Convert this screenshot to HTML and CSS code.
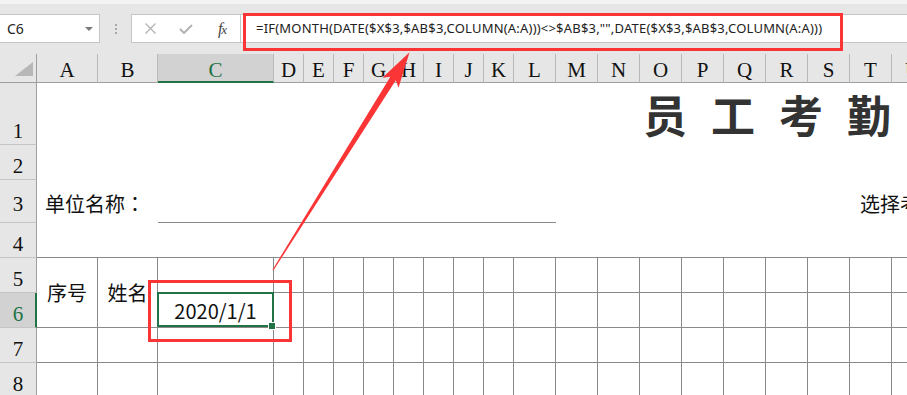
FILE: index.html
```html
<!DOCTYPE html>
<html lang="zh-CN">
<head>
	<meta charset="UTF-8">
	<title>员工考勤表</title>
	<link rel="stylesheet" href="styles.css">
</head>
<body>
	<!-- 编辑栏 -->
	<div class="toolbar">
		<div class="formula-row">
			<div class="name-box">
				<span>C6</span>
				<i class="drop"></i>
			</div>
			<div class="grip"><i></i><i></i><i></i></div>
			<div class="fx-box">
				<svg width="11" height="11" viewBox="0 0 11 11"><path d="M0.5 0.5 L10.5 10.5 M10.5 0.5 L0.5 10.5" stroke="#b3b3b3" stroke-width="1.3" fill="none"/></svg>
				<svg width="14" height="10" viewBox="0 0 14 10"><path d="M1 5 L5 9 L13 1" stroke="#b3b3b3" stroke-width="2" fill="none"/></svg>
				<span class="fx">f<span>x</span></span>
			</div>
			<div class="formula">=IF(MONTH(DATE($X$3,$AB$3,COLUMN(A:A)))&lt;&gt;$AB$3,"",DATE($X$3,$AB$3,COLUMN(A:A)))</div>
		</div>
	</div>

	<!-- 表格 -->
	<div class="sheet">
		<div class="corner">
			<svg width="37" height="28" viewBox="0 0 37 28"><polygon points="33,8 33,22 15,22" fill="#b7b7b7"/></svg>
		</div>
		<div class="ch">A</div>
		<div class="ch">B</div>
		<div class="ch sel">C</div>
		<div class="ch">D</div>
		<div class="ch">E</div>
		<div class="ch">F</div>
		<div class="ch">G</div>
		<div class="ch">H</div>
		<div class="ch">I</div>
		<div class="ch">J</div>
		<div class="ch">K</div>
		<div class="ch">L</div>
		<div class="ch">M</div>
		<div class="ch">N</div>
		<div class="ch">O</div>
		<div class="ch">P</div>
		<div class="ch">Q</div>
		<div class="ch">R</div>
		<div class="ch">S</div>
		<div class="ch">T</div>
		<div class="ch">U</div>

		<!-- 1 -->
		<div class="rh">1</div>
		<div class="span-3"></div>
		<div class="title">员工考勤表</div>

		<!-- 2 -->
		<div class="rh">2</div>
		<div class="span-all"></div>

		<!-- 3 -->
		<div class="rh rh-3">3</div>
		<div class="label span-2">单位名称<span class="colon">：</span></div>
		<div class="underline span-10"></div>
		<div class="span-7"></div>
		<div class="label label-right span-2">选择考勤月份<span class="colon">：</span></div>

		<!-- 4 -->
		<div class="rh">4</div>
		<div class="span-all line-bottom"></div>

		<!-- 5 -->
		<div class="rh">5</div>
		<div class="c head merged">序号</div>
		<div class="c head merged">姓名</div>
		<div class="c"></div>
		<div class="c"></div><div class="c"></div><div class="c"></div><div class="c"></div>
		<div class="c"></div><div class="c"></div><div class="c"></div><div class="c"></div>
		<div class="c"></div><div class="c"></div><div class="c"></div><div class="c"></div><div class="c"></div>
		<div class="c"></div><div class="c"></div><div class="c"></div><div class="c"></div><div class="c"></div>

		<!-- 6 -->
		<div class="rh sel">6</div>
		<div class="c active">2020/1/1</div>
		<div class="c"></div><div class="c"></div><div class="c"></div><div class="c"></div>
		<div class="c"></div><div class="c"></div><div class="c"></div><div class="c"></div>
		<div class="c"></div><div class="c"></div><div class="c"></div><div class="c"></div><div class="c"></div>
		<div class="c"></div><div class="c"></div><div class="c"></div><div class="c"></div><div class="c"></div>

		<!-- 7 -->
		<div class="rh">7</div>
		<div class="c"></div><div class="c"></div><div class="c"></div>
		<div class="c"></div><div class="c"></div><div class="c"></div><div class="c"></div>
		<div class="c"></div><div class="c"></div><div class="c"></div><div class="c"></div>
		<div class="c"></div><div class="c"></div><div class="c"></div><div class="c"></div><div class="c"></div>
		<div class="c"></div><div class="c"></div><div class="c"></div><div class="c"></div><div class="c"></div>

		<!-- 8 -->
		<div class="rh">8</div>
		<div class="c"></div><div class="c"></div><div class="c"></div>
		<div class="c"></div><div class="c"></div><div class="c"></div><div class="c"></div>
		<div class="c"></div><div class="c"></div><div class="c"></div><div class="c"></div>
		<div class="c"></div><div class="c"></div><div class="c"></div><div class="c"></div><div class="c"></div>
		<div class="c"></div><div class="c"></div><div class="c"></div><div class="c"></div><div class="c"></div>
	</div>

	<!-- 标注：红框和箭头 -->
	<svg class="marks" width="907" height="395" viewBox="0 0 907 395">
		<rect x="244.5" y="14.5" width="597" height="35" fill="none" stroke="#fb3535" stroke-width="3"/>
		<rect x="149.5" y="281.5" width="141" height="59" fill="none" stroke="#fb3535" stroke-width="3"/>
		<g transform="translate(273 270) rotate(-57.9)">
			<polygon points="0,-0.6 226,-3.2 221,-9.5 257,0 221,9.5 226,3.2 0,0.6" fill="#fb3535"/>
		</g>
	</svg>
</body>
</html>
```

FILE: styles.css
```css
body {
	margin: 0;
	width: 907px;
	height: 395px;
	overflow: hidden;
	position: relative;
	background: #fff;
	font-family: "Noto Sans CJK SC", "Noto Sans", sans-serif;
	color: #111;
}

/* 编辑栏 */
.toolbar {
	height: 54px;
	box-sizing: border-box;
	background: #e6e6e6;
	border-top: 4px solid #f3f3f3;
	padding-top: 10px;
}
.formula-row {
	display: flex;
	height: 29px;
}
.name-box,
.fx-box,
.formula {
	box-sizing: border-box;
	background: #fff;
	border: 1px solid #c6c6c6;
}
.name-box {
	width: 101px;
	margin-left: -1px;
	display: flex;
	align-items: center;
	justify-content: space-between;
	padding: 0 6px 0 7px;
	font-family: "Noto Sans", sans-serif;
	font-size: 14px;
	color: #222;
}
.drop {
	width: 0;
	height: 0;
	border-left: 4px solid transparent;
	border-right: 4px solid transparent;
	border-top: 4px solid #7a7a7a;
}
.grip {
	width: 31px;
	display: flex;
	flex-direction: column;
	align-items: center;
	justify-content: center;
	gap: 2px;
}
.grip i {
	width: 2px;
	height: 2px;
	background: #a8a8a8;
}
.fx-box {
	width: 110px;
	display: grid;
	grid-template-columns: repeat(3, 36px);
	align-items: center;
	justify-items: center;
}
.fx {
	font-family: "Liberation Serif", serif;
	font-style: italic;
	font-size: 16px;
	color: #444;
	letter-spacing: -1px;
}
.fx span {
	font-size: 13px;
}
.formula {
	flex: 1;
	border-left: none;
	margin-right: -2px;
	padding-left: 15px;
	font-family: "Noto Sans", sans-serif;
	font-size: 13px;
	letter-spacing: 0.2px;
	line-height: 27px;
	color: #222;
	white-space: nowrap;
}

/* 工作表 */
.sheet {
	display: grid;
	grid-template-columns: 37px 61px 60px 116px repeat(8, 30px) repeat(10, 42px);
	grid-template-rows: 29px 62px 35px 43px 35px 35px 35px 35px 35px;
	width: 934px;
}
.sheet > div {
	box-sizing: border-box;
}
.corner {
	background: #e6e6e6;
	border-right: 1px solid #9e9e9e;
	border-bottom: 1px solid #9e9e9e;
}
.corner svg {
	display: block;
}
.ch {
	background: #e6e6e6;
	border-right: 1px solid #b9b9b9;
	border-bottom: 1px solid #9e9e9e;
	display: flex;
	justify-content: center;
	align-items: flex-end;
	font-family: "Liberation Serif", serif;
	font-size: 21px;
	line-height: 21px;
	padding-bottom: 1px;
}
.ch.sel {
	background: #d2d2d2;
	border-bottom: 2px solid #217346;
	padding-bottom: 0;
	color: #217346;
}
.rh {
	background: #e6e6e6;
	border-right: 1px solid #9e9e9e;
	border-bottom: 1px solid #c4c4c4;
	display: flex;
	justify-content: center;
	align-items: flex-end;
	padding-bottom: 2px;
	font-family: "Liberation Serif", serif;
	font-size: 21px;
	line-height: 21px;
}
.rh-3 {
	padding-bottom: 7px;
}
.rh.sel {
	background: #d2d2d2;
	border-right: 2px solid #217346;
	padding-left: 1px;
	color: #217346;
}

.span-2 { grid-column: span 2; }
.span-3 { grid-column: span 3; }
.span-7 { grid-column: span 7; }
.span-10 { grid-column: span 10; }
.span-all { grid-column: span 21; }

.line-bottom,
.underline {
	border-bottom: 1px solid #898989;
}

.title {
	grid-column: span 18;
	display: flex;
	align-items: flex-end;
	padding: 0 0 9px 369px;
	font-size: 44px;
	line-height: 44px;
	font-weight: 700;
	letter-spacing: 24px;
	color: #333;
	white-space: nowrap;
	overflow: hidden;
}

.label {
	display: flex;
	align-items: flex-end;
	padding: 0 0 9px 8px;
	font-size: 20px;
	line-height: 20px;
	white-space: nowrap;
	overflow: hidden;
}
.label-right {
	padding-left: 10px;
}
.colon {
	font-family: "Noto Sans CJK TC", "Noto Sans CJK SC", sans-serif;
}

/* 表头区域单元格 */
.c {
	border-right: 1px solid #898989;
	border-bottom: 1px solid #898989;
	display: flex;
	align-items: center;
	justify-content: center;
	font-size: 20px;
}
.merged {
	grid-row: span 2;
}
.active {
	position: relative;
	font-size: 20px;
}
.active::before {
	content: "";
	position: absolute;
	left: -1px;
	top: -1px;
	right: -1px;
	bottom: 0;
	border: 2px solid #217346;
	box-sizing: border-box;
}
.active::after {
	content: "";
	position: absolute;
	right: -2px;
	bottom: -2px;
	width: 6px;
	height: 6px;
	background: #217346;
	box-shadow: 0 0 0 1px #fff;
}

.marks {
	position: absolute;
	left: 0;
	top: 0;
	pointer-events: none;
}
```
